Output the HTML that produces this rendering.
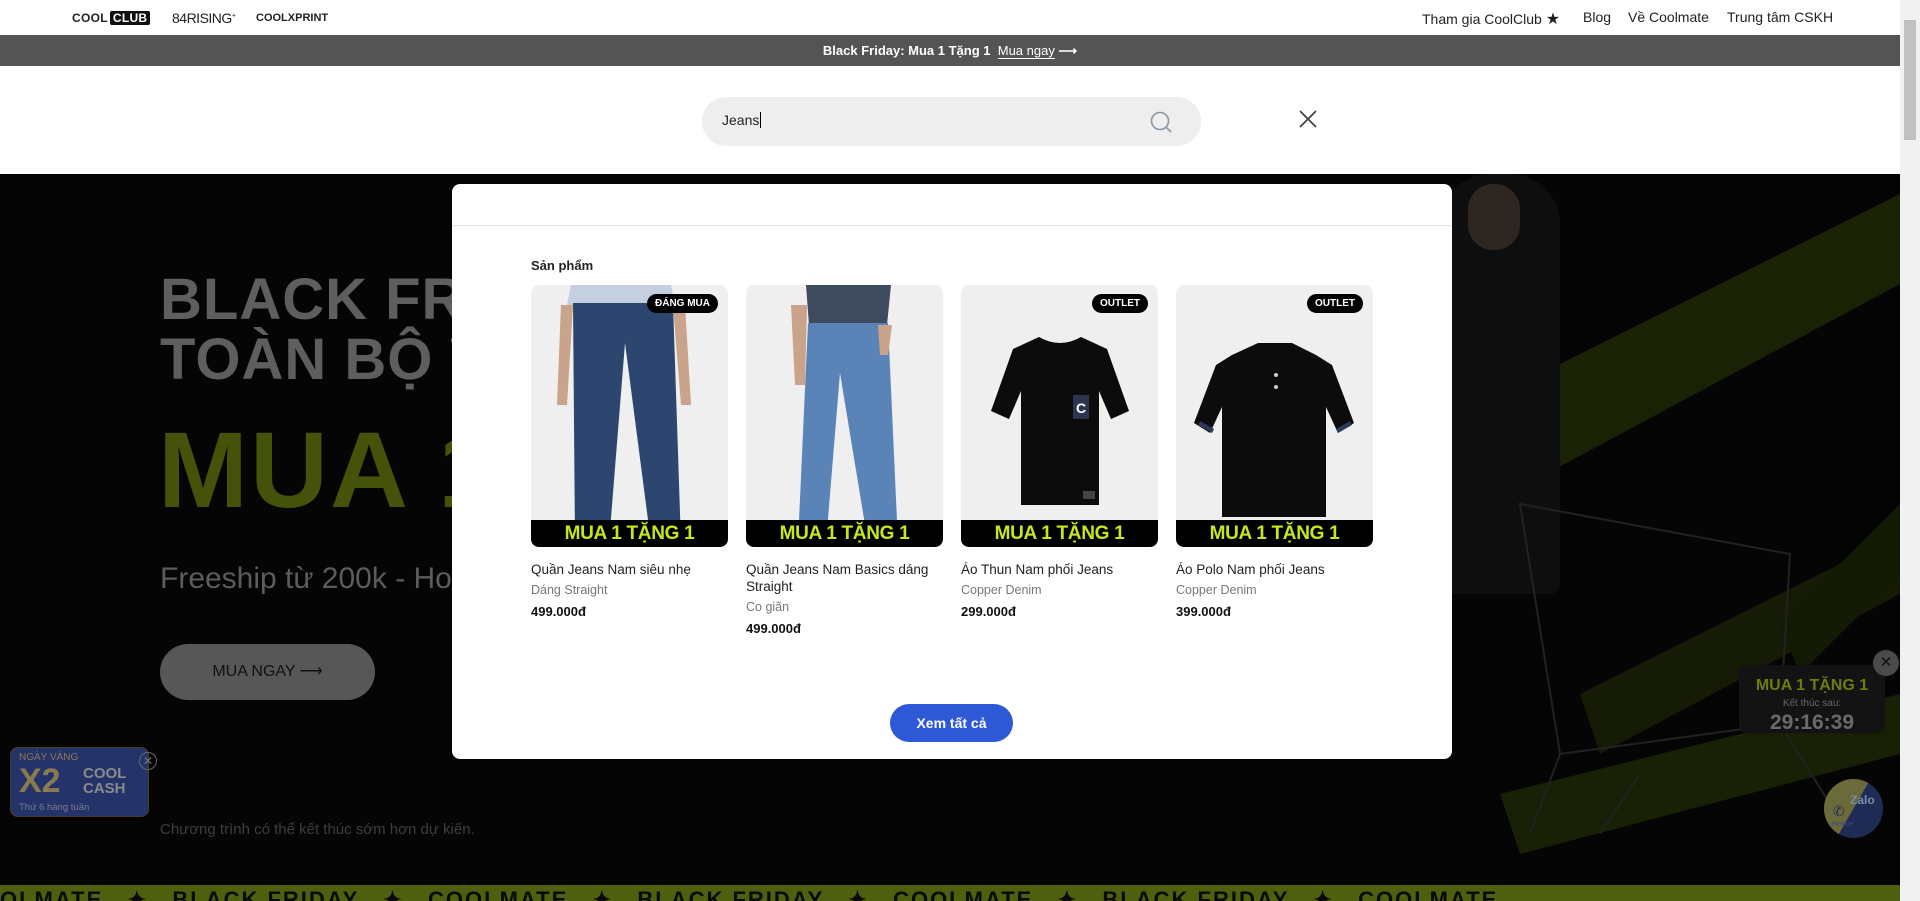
<!DOCTYPE html>
<html><head><meta charset="utf-8"><style>
*{margin:0;padding:0;box-sizing:border-box}
body{width:1920px;height:901px;overflow:hidden;font-family:"Liberation Sans",sans-serif;background:#000;position:relative}
.abs{position:absolute}
.top{left:0;top:0;width:1900px;height:35px;background:#fff;font-size:13px;color:#222}
.bar{left:0;top:35px;width:1900px;height:31px;background:#545454;color:#fff;font-size:13px;font-weight:bold;text-align:center;line-height:31px}
.sa{left:0;top:66px;width:1900px;height:108px;background:#fff}
.pill{left:702px;top:97px;width:499px;height:49px;border-radius:25px;background:#eeeeee}
.hero{left:0;top:174px;width:1900px;height:711px;background:#050505;overflow:hidden}
.modal{left:452px;top:184px;width:1000px;height:575px;background:#fff;border-radius:8px}
.card{position:absolute;top:101px;width:197px}
.img{width:197px;height:262px;background:#efefef;border-radius:8px;overflow:hidden;position:relative}
.ban{position:absolute;left:0;bottom:0;width:100%;height:27px;background:#000;color:#c8e61a;font-weight:bold;font-size:19px;text-align:center;line-height:28px;letter-spacing:-.3px}
.tag{position:absolute;right:10px;top:9px;background:#000;color:#fff;font-size:10px;font-weight:bold;border-radius:11px;padding:4px 8px}
.t{font-size:13.5px;color:#222;margin-top:14px;line-height:17px}
.s{font-size:12.5px;color:#777;margin-top:5px}
.p{font-size:13px;color:#111;font-weight:bold;margin-top:7px}
.sb{left:1900px;top:0;width:20px;height:901px;background:#f1f1f1}
</style></head><body>
<div class="abs top">
 <div class="abs" style="left:72px;top:11px;font-weight:bold;font-size:12px;letter-spacing:.3px">COOL<span style="background:#111;color:#fff;padding:0 3px;margin-left:2px;border-radius:2px">CLUB</span></div>
 <div class="abs" style="left:172px;top:10px;font-size:14px;letter-spacing:-.5px">84RISING<sup style="font-size:7px">+</sup></div>
 <div class="abs" style="left:256px;top:12px;font-size:11px;font-weight:bold">COOLXPRINT</div>
 <div class="abs" style="left:1422px;top:9px;font-size:14px">Tham gia CoolClub <span style="font-size:16px">★</span></div>
 <div class="abs" style="left:1583px;top:9px;font-size:14px">Blog</div>
 <div class="abs" style="left:1628px;top:9px;font-size:14px">Về Coolmate</div>
 <div class="abs" style="left:1727px;top:9px;font-size:14px">Trung tâm CSKH</div>
</div>
<div class="abs bar">Black Friday: Mua 1 Tặng 1 &nbsp;<span style="border-bottom:1px solid #fff;font-weight:normal">Mua ngay</span> ⟶</div>
<div class="abs sa"></div>
<div class="abs pill"><span class="abs" style="left:20px;top:15px;font-size:14px;color:#222">Jeans<span style="border-left:1px solid #000;margin-left:1px"></span></span>
 <svg class="abs" style="left:447px;top:13px" width="24" height="24" viewBox="0 0 24 24"><circle cx="11" cy="11" r="8.5" fill="none" stroke="#8a97a3" stroke-width="1.6"/><path d="M17 17l5 5" stroke="#8a97a3" stroke-width="1.6"/></svg></div>
<svg class="abs" style="left:1299px;top:110px" width="18" height="18" viewBox="0 0 18 18"><path d="M1 1l16 16M17 1L1 17" stroke="#444" stroke-width="1.8"/></svg>

<div class="abs hero">
 <svg class="abs" style="left:1400px;top:0" width="500" height="711" viewBox="0 0 500 711">
  <path d="M60 240L500 20L500 110L90 330Z" fill="#1a2206"/>
  <path d="M180 520L500 360L500 420L200 580Z" fill="#151b05"/>
  <path d="M100 620L500 520L500 580L120 680Z" fill="#182005"/>
  <path d="M380 450L500 330L500 400L400 500Z" fill="#131a04"/>
 </svg>
 <div class="abs" style="left:1440px;top:0;width:120px;height:420px;background:#0e0e0e;border-radius:50px 50px 10px 10px"></div>
 <div class="abs" style="left:1468px;top:10px;width:52px;height:66px;background:#2e2620;border-radius:25px"></div>
 <svg class="abs" style="left:1500px;top:300px" width="400" height="360" viewBox="0 0 400 360"><g fill="none" stroke="#222" stroke-width="2"><path d="M20 30L290 80L280 250L60 280Z"/><path d="M60 280L30 360M280 250L330 330M140 300L100 360"/></g></svg>
 <div class="abs" style="left:160px;top:96px;font-size:58px;font-weight:bold;color:#5e5e5e;line-height:60px;letter-spacing:1px">BLACK FRIDAY<br>TOÀN BỘ WEBSITE</div>
 <div class="abs" style="left:158px;top:233px;font-size:108px;font-weight:bold;color:#44520a;letter-spacing:2px">MUA 1</div>
 <div class="abs" style="left:160px;top:388px;font-size:30px;color:#5c5c5c">Freeship từ 200k - Hoàn trả 60 ngày</div>
 <div class="abs" style="left:160px;top:470px;width:215px;height:56px;border-radius:28px;background:#575757;color:#111;font-size:16px;text-align:center;line-height:56px">MUA NGAY ⟶</div>
 <div class="abs" style="left:160px;top:647px;font-size:15px;color:#3e3e3e">Chương trình có thể kết thúc sớm hơn dự kiến.</div>
</div>
<div class="abs" style="left:0;top:885px;width:1900px;height:16px;background:#4e600e;overflow:hidden;font-weight:bold;font-size:22px;color:#0a0a0a;line-height:30px;white-space:nowrap;letter-spacing:2px">OLMATE &nbsp; ✦ &nbsp; BLACK FRIDAY &nbsp; ✦ &nbsp; COOLMATE &nbsp; ✦ &nbsp; BLACK FRIDAY &nbsp; ✦ &nbsp; COOLMATE &nbsp; ✦ &nbsp; BLACK FRIDAY &nbsp; ✦ &nbsp; COOLMATE</div>

<div class="abs" style="left:10px;top:747px;width:139px;height:70px;background:#24346a;border-radius:8px;border:1px solid #4a4020;color:#8a7a50;overflow:hidden">
 <div class="abs" style="left:8px;top:4px;font-size:10px">NGÀY VÀNG</div>
 <div class="abs" style="left:8px;top:14px;font-size:34px;font-weight:bold;color:#8a7a50">X2</div>
 <div class="abs" style="left:72px;top:18px;font-size:15px;font-weight:bold;line-height:15px;color:#8a8a8a">COOL<br>CASH</div>
 <div class="abs" style="left:8px;top:54px;font-size:9.5px;color:#7a7a90">Thứ 6 hàng tuần</div>
</div>
<div class="abs" style="left:139px;top:752px;width:18px;height:18px;border-radius:9px;border:1px solid #666;color:#777;font-size:12px;text-align:center;line-height:16px">✕</div>

<div class="abs" style="left:1739px;top:665px;width:146px;height:68px;background:#131313;border-radius:8px;text-align:center">
 <div style="color:#6a7e10;font-weight:bold;font-size:16px;margin-top:12px">MUA 1 TẶNG 1</div>
 <div style="color:#666;font-size:10px;margin-top:3px">Kết thúc sau:</div>
 <div style="color:#6a6a6a;font-weight:bold;font-size:21px;margin-top:2px">29:16:39</div>
</div>
<div class="abs" style="left:1873px;top:650px;width:26px;height:26px;border-radius:13px;background:#4a4a4a;color:#111;font-size:15px;text-align:center;line-height:26px">✕</div>
<div class="abs" style="left:1824px;top:779px;width:59px;height:59px;border-radius:30px;background:linear-gradient(120deg,#6a6a3a 50%,#1e2c55 50%);overflow:hidden">
 <div class="abs" style="left:26px;top:14px;color:#7a8aa8;font-weight:bold;font-size:12px">Zalo</div>
 <div class="abs" style="left:9px;top:24px;color:#1e2c55;font-size:14px">✆</div>
 <div class="abs" style="left:8px;top:42px;color:#3a4a70;font-size:7px">Hotline</div>
</div>

<div class="abs modal">
 <div class="abs" style="left:0;top:41px;width:1000px;height:1px;background:#e4e4e4"></div>
 <div class="abs" style="left:79px;top:74px;font-size:13px;font-weight:bold;color:#222">Sản phẩm</div>
 <div class="card" style="left:79px"><div class="img">
  <svg width="197" height="262" viewBox="0 0 197 262"><path d="M40 0h100l4 20h-108z" fill="#c4d0e0"/><path d="M42 18h100l8 240h-30l-26-200-16 200h-34z" fill="#2c4670"/><path d="M30 20l12 0-6 100-10 0z" fill="#c9a38a"/><path d="M142 20l12 0 6 100-10 0z" fill="#c9a38a"/><ellipse cx="62" cy="256" rx="18" ry="7" fill="#ddd"/><ellipse cx="130" cy="256" rx="18" ry="7" fill="#ddd"/></svg>
  <div class="tag">ĐÁNG MUA</div><div class="ban">MUA 1 TẶNG 1</div></div>
  <div class="t">Quần Jeans Nam siêu nhẹ</div><div class="s">Dáng Straight</div><div class="p">499.000đ</div></div>
 <div class="card" style="left:294px"><div class="img">
  <svg width="197" height="262" viewBox="0 0 197 262"><path d="M60 0h85l-4 40h-78z" fill="#3e4a5e"/><path d="M62 38h80l10 220h-30l-28-170-14 170h-28z" fill="#5a84b8"/><path d="M45 20l16 0-2 80-10 0z" fill="#c9a38a"/><path d="M132 40l14 0-4 30-8 0z" fill="#c9a38a"/></svg>
  <div class="ban">MUA 1 TẶNG 1</div></div>
  <div class="t">Quần Jeans Nam Basics dáng Straight</div><div class="s">Co giãn</div><div class="p">499.000đ</div></div>
 <div class="card" style="left:509px"><div class="img">
  <svg width="197" height="262" viewBox="0 0 197 262"><path d="M78 52l-26 12-22 62 18 8 12-28 0 114h78l0-114 12 28 18-8-22-62-26-12q-21 12-42 0z" fill="#0c0c0c"/><rect x="112" y="110" width="16" height="24" fill="#2a3550"/><text x="120" y="128" font-size="14" font-weight="bold" fill="#fff" text-anchor="middle" font-family="Liberation Sans">C</text><rect x="122" y="206" width="12" height="8" fill="#444"/></svg>
  <div class="tag">OUTLET</div><div class="ban">MUA 1 TẶNG 1</div></div>
  <div class="t">Áo Thun Nam phối Jeans</div><div class="s">Copper Denim</div><div class="p">299.000đ</div></div>
 <div class="card" style="left:724px"><div class="img">
  <svg width="197" height="262" viewBox="0 0 197 262"><path d="M82 58h34l24 12 16 10 22 58-16 10-12-26 0 110h-104l0-110-12 26-16-10 22-58 16-10z" fill="#0c0c0c"/><path d="M22 140l14 8 2-4-14-8zM176 140l-14 8-2-4 14-8z" fill="#2a3a5a"/><circle cx="100" cy="90" r="2" fill="#ccc"/><circle cx="100" cy="102" r="2" fill="#ccc"/><rect x="118" y="236" width="10" height="8" fill="#444"/></svg>
  <div class="tag">OUTLET</div><div class="ban">MUA 1 TẶNG 1</div></div>
  <div class="t">Áo Polo Nam phối Jeans</div><div class="s">Copper Denim</div><div class="p">399.000đ</div></div>
 <div class="abs" style="left:438px;top:520px;width:123px;height:38px;border-radius:19px;background:#2e59d6;color:#fff;font-size:14px;font-weight:bold;text-align:center;line-height:38px">Xem tất cả</div>
</div>
<div class="abs sb"><div class="abs" style="left:4px;top:20px;width:12px;height:120px;background:#c1c1c1"></div></div>
</body></html>
